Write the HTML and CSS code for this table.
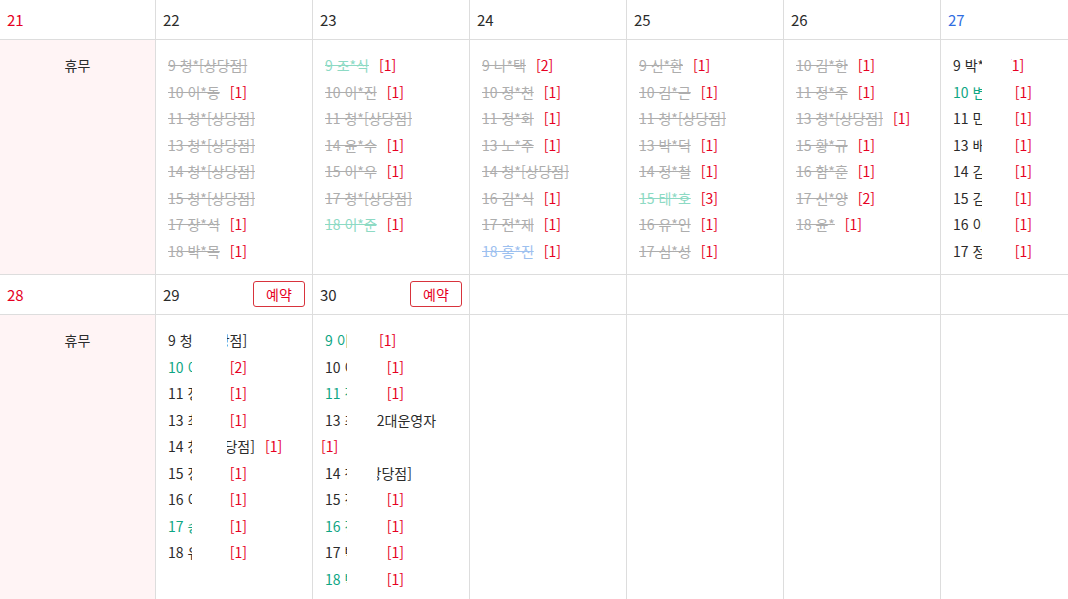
FILE: index.html
```html
<!DOCTYPE html>
<html lang="ko">
<head>
  <meta charset="UTF-8" />
  <meta name="viewport" content="width=device-width, initial-scale=1.0"/>
  <title>예약 현황</title>
  <link rel="stylesheet" href="styles.css">
</head>
<body>
  <div class="calendar">
    <!-- week 1 : dates -->
    <div class="day-head sun">21</div>
    <div class="day-head">22</div>
    <div class="day-head">23</div>
    <div class="day-head">24</div>
    <div class="day-head">25</div>
    <div class="day-head">26</div>
    <div class="day-head sat">27</div>

    <!-- week 1 : bookings -->
    <div class="day-body holiday"><p class="off">휴무</p></div>
    <div class="day-body">
      <ul class="list">
        <li class="done"><span class="name">9 청*[상당점]</span></li>
        <li class="done"><span class="name">10 이*동</span> <span class="cnt">[1]</span></li>
        <li class="done"><span class="name">11 청*[상당점]</span></li>
        <li class="done"><span class="name">13 청*[상당점]</span></li>
        <li class="done"><span class="name">14 청*[상당점]</span></li>
        <li class="done"><span class="name">15 청*[상당점]</span></li>
        <li class="done"><span class="name">17 장*석</span> <span class="cnt">[1]</span></li>
        <li class="done"><span class="name">18 박*목</span> <span class="cnt">[1]</span></li>
      </ul>
    </div>
    <div class="day-body">
      <ul class="list">
        <li class="done mint"><span class="name">9 조*식</span> <span class="cnt">[1]</span></li>
        <li class="done"><span class="name">10 이*진</span> <span class="cnt">[1]</span></li>
        <li class="done"><span class="name">11 청*[상당점]</span></li>
        <li class="done"><span class="name">14 윤*수</span> <span class="cnt">[1]</span></li>
        <li class="done"><span class="name">15 이*우</span> <span class="cnt">[1]</span></li>
        <li class="done"><span class="name">17 청*[상당점]</span></li>
        <li class="done mint"><span class="name">18 이*준</span> <span class="cnt">[1]</span></li>
      </ul>
    </div>
    <div class="day-body">
      <ul class="list">
        <li class="done"><span class="name">9 나*택</span> <span class="cnt">[2]</span></li>
        <li class="done"><span class="name">10 정*천</span> <span class="cnt">[1]</span></li>
        <li class="done"><span class="name">11 정*화</span> <span class="cnt">[1]</span></li>
        <li class="done"><span class="name">13 노*주</span> <span class="cnt">[1]</span></li>
        <li class="done"><span class="name">14 청*[상당점]</span></li>
        <li class="done"><span class="name">16 김*식</span> <span class="cnt">[1]</span></li>
        <li class="done"><span class="name">17 전*재</span> <span class="cnt">[1]</span></li>
        <li class="done sky"><span class="name">18 홍*진</span> <span class="cnt">[1]</span></li>
      </ul>
    </div>
    <div class="day-body">
      <ul class="list">
        <li class="done"><span class="name">9 신*환</span> <span class="cnt">[1]</span></li>
        <li class="done"><span class="name">10 김*근</span> <span class="cnt">[1]</span></li>
        <li class="done"><span class="name">11 청*[상당점]</span></li>
        <li class="done"><span class="name">13 박*덕</span> <span class="cnt">[1]</span></li>
        <li class="done"><span class="name">14 정*철</span> <span class="cnt">[1]</span></li>
        <li class="done mint"><span class="name">15 태*호</span> <span class="cnt">[3]</span></li>
        <li class="done"><span class="name">16 유*인</span> <span class="cnt">[1]</span></li>
        <li class="done"><span class="name">17 심*성</span> <span class="cnt">[1]</span></li>
      </ul>
    </div>
    <div class="day-body">
      <ul class="list">
        <li class="done"><span class="name">10 김*한</span> <span class="cnt">[1]</span></li>
        <li class="done"><span class="name">11 정*주</span> <span class="cnt">[1]</span></li>
        <li class="done"><span class="name">13 청*[상당점]</span> <span class="cnt">[1]</span></li>
        <li class="done"><span class="name">15 황*규</span> <span class="cnt">[1]</span></li>
        <li class="done"><span class="name">16 함*훈</span> <span class="cnt">[1]</span></li>
        <li class="done"><span class="name">17 신*양</span> <span class="cnt">[2]</span></li>
        <li class="done"><span class="name">18 윤*</span> <span class="cnt">[1]</span></li>
      </ul>
    </div>
    <div class="day-body">
      <ul class="list">
        <li><span class="name">9 박*호</span> <span class="cnt">[1]</span></li>
        <li class="green"><span class="name">10 변*수</span> <span class="cnt">[1]</span></li>
        <li><span class="name">11 민*수</span> <span class="cnt">[1]</span></li>
        <li><span class="name">13 배*준</span> <span class="cnt">[1]</span></li>
        <li><span class="name">14 김*수</span> <span class="cnt">[1]</span></li>
        <li><span class="name">15 김*영</span> <span class="cnt">[1]</span></li>
        <li><span class="name">16 이*민</span> <span class="cnt">[1]</span></li>
        <li><span class="name">17 정*호</span> <span class="cnt">[1]</span></li>
      </ul>
      <span class="mask mask-sat"></span>
    </div>

    <!-- week 2 : dates -->
    <div class="day-head sun">28</div>
    <div class="day-head">29 <button class="book">예약</button></div>
    <div class="day-head">30 <button class="book">예약</button></div>
    <div class="day-head"></div>
    <div class="day-head"></div>
    <div class="day-head"></div>
    <div class="day-head"></div>

    <!-- week 2 : bookings -->
    <div class="day-body holiday"><p class="off">휴무</p></div>
    <div class="day-body">
      <ul class="list">
        <li><span class="name">9 청*[상당점]</span></li>
        <li class="green"><span class="name">10 이*민</span> <span class="cnt">[2]</span></li>
        <li><span class="name">11 정*수</span> <span class="cnt">[1]</span></li>
        <li><span class="name">13 최*영</span> <span class="cnt">[1]</span></li>
        <li><span class="name">14 청*[상당점]</span> <span class="cnt">[1]</span></li>
        <li><span class="name">15 정*훈</span> <span class="cnt">[1]</span></li>
        <li><span class="name">16 이*호</span> <span class="cnt">[1]</span></li>
        <li class="green"><span class="name">17 송*진</span> <span class="cnt">[1]</span></li>
        <li><span class="name">18 유*석</span> <span class="cnt">[1]</span></li>
      </ul>
      <span class="mask mask-29"></span>
    </div>
    <div class="day-body">
      <ul class="list">
        <li class="green"><span class="name">9 이*민</span> <span class="cnt">[1]</span></li>
        <li><span class="name">10 이*수</span> <span class="cnt">[1]</span></li>
        <li class="green"><span class="name">11 정*현</span> <span class="cnt">[1]</span></li>
        <li><span class="name">13 최*영2대운영자</span> <span class="cnt">[1]</span></li>
        <li><span class="name">14 청*[상당점]</span></li>
        <li><span class="name">15 정*우</span> <span class="cnt">[1]</span></li>
        <li class="green"><span class="name">16 정*호</span> <span class="cnt">[1]</span></li>
        <li><span class="name">17 박*수</span> <span class="cnt">[1]</span></li>
        <li class="green"><span class="name">18 박*진</span> <span class="cnt">[1]</span></li>
      </ul>
      <span class="mask mask-30"></span>
    </div>
    <div class="day-body"></div>
    <div class="day-body"></div>
    <div class="day-body"></div>
    <div class="day-body"></div>
  </div>
</body>
</html>
```

FILE: styles.css
```css
:root {
  --line: #dddddd;
  --text: #2b2b2b;
  --red: #e60023;
  --blue: #2f6de1;
  --done: #adadad;
  --mint: #8ddac4;
  --sky: #9cc0ef;
  --green: #0ea684;
  --holiday-bg: #fff4f5;
}

html, body {
  margin: 0;
  overflow: hidden;
}

body {
  font-family: "Noto Sans CJK KR", "Noto Sans", sans-serif;
  color: var(--text);
  background: #fff;
}

.calendar {
  display: grid;
  grid-template-columns: 156px repeat(6, 157px);
  grid-template-rows: 40px 235px 40px 300px;
  width: 1098px;
}

.day-head,
.day-body {
  box-sizing: border-box;
  border-right: 1px solid var(--line);
  border-bottom: 1px solid var(--line);
}

.day-head {
  display: flex;
  align-items: center;
  justify-content: space-between;
  padding: 0 7px;
  font-size: 15px;
}

.day-head.sun {
  color: var(--red);
}

.day-head.sat {
  color: var(--blue);
}

.book {
  width: 52px;
  height: 26px;
  padding: 0;
  margin-top: -2px;
  font-family: inherit;
  font-size: 14px;
  color: var(--red);
  background: #fff;
  border: 1px solid #d8333c;
  border-radius: 3px;
  cursor: pointer;
}

.day-body {
  position: relative;
  padding: 12px 8px 0;
  font-size: 14px;
}

.day-body.holiday {
  background: var(--holiday-bg);
}

.off {
  margin: 0;
  line-height: 26.5px;
  text-align: center;
}

.list {
  list-style: none;
  margin: 0;
  padding: 0;
}

.list li {
  line-height: 26.5px;
  text-indent: 4px;
}

.name {
  padding-right: 6px;
}

.cnt {
  color: var(--red);
}

.done .name {
  color: var(--done);
  text-decoration: line-through;
}

.done.mint .name {
  color: var(--mint);
}

.done.sky .name {
  color: var(--sky);
}

.green .name {
  color: var(--green);
}

/* names hidden in the capture */
.mask {
  position: absolute;
  top: 0;
  bottom: 0;
  background: #fff;
}

.mask-sat {
  left: 41px;
  width: 29px;
}

.mask-29 {
  left: 36px;
  width: 35px;
}

.mask-30 {
  left: 34px;
  width: 30px;
}
```
